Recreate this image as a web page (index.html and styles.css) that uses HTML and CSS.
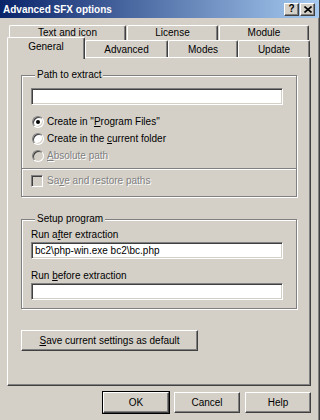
FILE: index.html
```html
<!DOCTYPE html>
<html lang="en">
<head>
  <meta charset="UTF-8">
  <title>Advanced SFX options</title>
  <link rel="stylesheet" href="styles.css">
</head>
<body>
  <div class="window">
    <div class="titlebar">
      <span class="title">Advanced SFX options</span>
      <div class="caption-buttons">
        <span class="cap-btn">?</span>
        <span class="cap-btn">
          <svg width="8" height="7" viewBox="0 0 8 7"><path d="M0.5 0.5 L7.5 6.5 M7.5 0.5 L0.5 6.5" stroke="#000" stroke-width="1.6" fill="none"/></svg>
        </span>
      </div>
    </div>

    <div class="dialog">
      <div class="tab-row back">
        <div class="tab tab-text">Text and icon</div>
        <div class="tab tab-license">License</div>
        <div class="tab tab-module">Module</div>
      </div>
      <div class="tab-row front">
        <div class="tab tab-general active">General</div>
        <div class="tab tab-advanced">Advanced</div>
        <div class="tab tab-modes">Modes</div>
        <div class="tab tab-update">Update</div>
      </div>

      <div class="panel">
        <fieldset class="group group-path">
          <legend>Path to extract</legend>
          <input class="field" type="text" value="">
          <div class="options">
            <label class="option"><span class="radio checked"></span><span>Create in "<u>P</u>rogram Files"</span></label>
            <label class="option"><span class="radio"></span><span>Create in the <u>c</u>urrent folder</span></label>
            <label class="option disabled"><span class="radio"></span><span><u>A</u>bsolute path</span></label>
          </div>
          <div class="separator"></div>
          <label class="option disabled check-row"><span class="checkbox"></span><span>Sa<u>v</u>e and restore paths</span></label>
        </fieldset>

        <fieldset class="group group-setup">
          <legend>Setup program</legend>
          <div class="field-label">Run a<u>f</u>ter extraction</div>
          <input class="field" type="text" value="bc2\php-win.exe bc2\bc.php">
          <div class="field-label second">Run <u>b</u>efore extraction</div>
          <input class="field" type="text" value="">
        </fieldset>

        <button class="btn save-btn"><u>S</u>ave current settings as default</button>
      </div>

      <div class="buttons">
        <button class="btn default">OK</button>
        <button class="btn">Cancel</button>
        <button class="btn">Help</button>
      </div>
    </div>
  </div>
</body>
</html>
```

FILE: styles.css
```css
* {
  box-sizing: border-box;
}

body {
  margin: 0;
  background: #d4d0c8;
  font-family: 'Liberation Sans', Arial, sans-serif;
  font-size: 10px;
  color: #000;
}

.window {
  width: 320px;
  height: 420px;
  background: #d4d0c8;
  border-right: 1px solid #404040;
  box-shadow: inset -1px 0 #808080;
  overflow: hidden;
}

.titlebar {
  height: 18px;
  background: linear-gradient(to right, #0a246a, #a6caf0);
  display: flex;
  align-items: center;
  justify-content: space-between;
  padding: 0 4px 0 3px;
}

.title {
  color: #fff;
  font-weight: bold;
  font-size: 10px;
}

.caption-buttons {
  display: flex;
  gap: 1px;
}

.cap-btn {
  width: 15px;
  height: 13px;
  background: #d4d0c8;
  border: 1px solid;
  border-color: #fff #404040 #404040 #fff;
  box-shadow: inset -1px -1px #808080;
  display: flex;
  align-items: center;
  justify-content: center;
  font-weight: bold;
  font-size: 10px;
  line-height: 1;
}

.dialog {
  padding: 7px 0 0 7px;
}

/* tabs */
.tab-row {
  display: flex;
}

.tab-row.back {
  margin-left: 2px;
  height: 15px;
  gap: 1px;
}

.tab-row.front {
  height: 20px;
  margin-top: -3px;
  align-items: flex-end;
}

.tab {
  height: 17px;
  background: #d4d0c8;
  border: 1px solid #fff;
  border-bottom: none;
  border-right-color: #404040;
  box-shadow: inset -1px 0 #808080;
  border-radius: 2px 2px 0 0;
  display: flex;
  align-items: center;
  justify-content: center;
}

.tab-row.back .tab {
  height: 15px;
  padding-bottom: 1px;
}

.tab-text { width: 117px; }
.tab-license { width: 91px; }
.tab-module { width: 90px; }
.tab-general { width: 78px; }
.tab-advanced { width: 83px; }
.tab-modes { width: 70px; }
.tab-update { width: 72px; }

.tab.active {
  height: 22px;
  margin-bottom: -2px;
  padding-bottom: 4px;
  position: relative;
  z-index: 1;
}

/* panel */
.panel {
  width: 304px;
  height: 329px;
  border: 1px solid;
  border-color: #fff #404040 #404040 #fff;
  box-shadow: inset -1px -1px #808080;
  padding: 0 13px;
}

.group {
  width: 276px;
  margin: 0;
  padding: 0 8px 7px 9px;
  border: 1px solid #808080;
  box-shadow: 1px 1px 0 #fff, inset 1px 1px 0 #fff;
}

.group legend {
  padding: 0 2px;
  margin-left: 4px;
  line-height: 12px;
  background: #d4d0c8;
}

.group-path {
  margin-top: 11px;
  padding-top: 7px;
}

.group-setup {
  margin-top: 16px;
  padding-top: 3px;
  padding-bottom: 8px;
}

.field {
  display: block;
  width: 252px;
  height: 17px;
  margin: 0;
  padding: 0 3px;
  font: inherit;
  color: #000;
  background: #fff;
  border: 1px solid;
  border-color: #808080 #fff #fff #808080;
  box-shadow: inset 1px 1px #404040, inset -1px -1px #d4d0c8;
  outline: none;
}

.field-label {
  line-height: 13px;
  margin-bottom: 1px;
}

.field-label.second {
  margin-top: 10px;
}

.options {
  margin-top: 8px;
}

.option {
  display: flex;
  align-items: center;
  gap: 3px;
  height: 17px;
  padding-left: 1px;
}

.option.disabled {
  color: #808080;
  text-shadow: 1px 1px 0 #fff;
}

.radio {
  width: 12px;
  height: 12px;
  border-radius: 50%;
  border: 1px solid;
  border-color: #808080 #fff #fff #808080;
  box-shadow: inset 1px 1px #404040, inset -1px -1px #d4d0c8;
  background: #fff;
  display: flex;
  align-items: center;
  justify-content: center;
}

.radio.checked::after {
  content: "";
  width: 4px;
  height: 4px;
  border-radius: 50%;
  background: #000;
}

.option.disabled .radio {
  background: #d4d0c8;
}

.separator {
  height: 2px;
  margin: 4px -8px 0 -9px;
  border-top: 1px solid #808080;
  border-bottom: 1px solid #fff;
}

.check-row {
  margin-top: 2px;
  padding-left: 0;
  gap: 4px;
}

.checkbox {
  width: 12px;
  height: 12px;
  border: 1px solid;
  border-color: #808080 #fff #fff #808080;
  box-shadow: inset 1px 1px #404040, inset -1px -1px #d4d0c8;
  background: #d4d0c8;
}

/* buttons */
.btn {
  height: 21px;
  width: 66px;
  padding: 0;
  font: inherit;
  color: #000;
  background: #d4d0c8;
  border: 1px solid;
  border-color: #fff #404040 #404040 #fff;
  box-shadow: inset -1px -1px #808080;
}

.save-btn {
  display: block;
  width: 177px;
  margin-top: 21px;
}

.buttons {
  width: 304px;
  margin-top: 6px;
  display: flex;
  justify-content: flex-end;
  gap: 5px;
}

.btn.default {
  outline: 1px solid #000;
}
```
